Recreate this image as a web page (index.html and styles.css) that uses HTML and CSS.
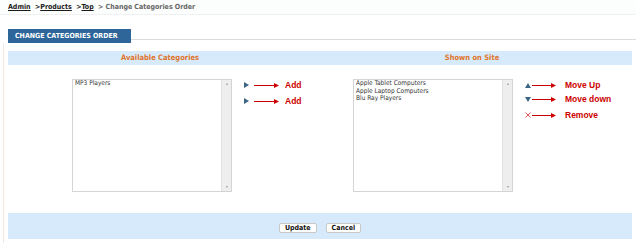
FILE: index.html
```html
<!DOCTYPE html>
<html>
<head>
<meta charset="utf-8">
<link rel="stylesheet" href="styles.css">
</head>
<body>
<div class="crumbs">
  <a class="crumb-link" href="#">Admin</a>&nbsp; &gt;<a class="crumb-link" href="#">Products</a>&nbsp; &gt;<a class="crumb-link" href="#">Top</a>&nbsp; <span class="crumb-cur">&gt; Change Categories Order</span>
</div>
<div class="tabrow">
  <div class="tab">CHANGE CATEGORIES ORDER</div>
  <div class="tabline"></div>
</div>
<div class="panel">
  <div class="headbar">
    <div class="headcell">Available Categories</div>
    <div class="headcell">Shown on Site</div>
  </div>
  <div class="cols">
    <div class="col col-left">
      <div class="listbox">
        <div class="items">
          <div>MP3 Players</div>
        </div>
        <div class="scroll"><span class="sc-up"></span><span class="sc-down"></span></div>
      </div>
      <div class="ctls ctls-left">
        <div class="ctl">
          <svg class="ico" width="5" height="6" viewBox="0 0 5 6"><polygon points="0,0 5,3 0,6" fill="#3d6684"/></svg>
          <svg class="arr arr-l" width="25" height="5" viewBox="0 0 25 5"><line x1="0" y1="2.5" x2="21" y2="2.5" stroke="#cc0000" stroke-width="1"/><polygon points="20,0 25,2.5 20,5" fill="#cc0000"/></svg>
          <span class="lbl">Add</span>
        </div>
        <div class="ctl">
          <svg class="ico" width="5" height="6" viewBox="0 0 5 6"><polygon points="0,0 5,3 0,6" fill="#3d6684"/></svg>
          <svg class="arr arr-l" width="25" height="5" viewBox="0 0 25 5"><line x1="0" y1="2.5" x2="21" y2="2.5" stroke="#cc0000" stroke-width="1"/><polygon points="20,0 25,2.5 20,5" fill="#cc0000"/></svg>
          <span class="lbl">Add</span>
        </div>
      </div>
    </div>
    <div class="col col-right">
      <div class="listbox">
        <div class="items">
          <div>Apple Tablet Computers</div>
          <div>Apple Laptop Computers</div>
          <div>Blu Ray Players</div>
        </div>
        <div class="scroll"><span class="sc-up"></span><span class="sc-down"></span></div>
      </div>
      <div class="ctls ctls-right">
        <div class="ctl ctl-r">
          <svg class="ico" width="6" height="5" viewBox="0 0 6 5"><polygon points="0,5 3,0 6,5" fill="#3d6684"/></svg>
          <svg class="arr arr-r" width="24" height="5" viewBox="0 0 24 5"><line x1="0" y1="2.5" x2="20" y2="2.5" stroke="#cc0000" stroke-width="1"/><polygon points="19,0 24,2.5 19,5" fill="#cc0000"/></svg>
          <span class="lbl">Move Up</span>
        </div>
        <div class="ctl ctl-r">
          <svg class="ico" width="6" height="5" viewBox="0 0 6 5"><polygon points="0,0 6,0 3,5" fill="#3d6684"/></svg>
          <svg class="arr arr-r" width="24" height="5" viewBox="0 0 24 5"><line x1="0" y1="2.5" x2="20" y2="2.5" stroke="#cc0000" stroke-width="1"/><polygon points="19,0 24,2.5 19,5" fill="#cc0000"/></svg>
          <span class="lbl">Move down</span>
        </div>
        <div class="ctl ctl-r ctl-remove">
          <svg class="ico" width="6" height="6" viewBox="0 0 6 6"><path d="M0.5 0.5 L5.5 5.5 M5.5 0.5 L0.5 5.5" stroke="#cc3333" stroke-width="0.8" fill="none"/></svg>
          <svg class="arr arr-r" width="24" height="5" viewBox="0 0 24 5"><line x1="0" y1="2.5" x2="20" y2="2.5" stroke="#cc0000" stroke-width="1"/><polygon points="19,0 24,2.5 19,5" fill="#cc0000"/></svg>
          <span class="lbl">Remove</span>
        </div>
      </div>
    </div>
  </div>
  <div class="footbar">
    <button class="btn" type="button">Update</button>
    <button class="btn" type="button">Cancel</button>
  </div>
</div>
</body>
</html>
```

FILE: styles.css
```css
html, body {
  margin: 0;
  padding: 0;
  background: #ffffff;
}
body {
  font-family: "DejaVu Sans Condensed", "DejaVu Sans", sans-serif;
  font-size: 7px;
  color: #222;
  width: 636px;
  height: 243px;
  overflow: hidden;
}
.crumbs {
  height: 15px;
  box-sizing: border-box;
  padding: 3px 0 0 8px;
  line-height: 8px;
  font-weight: bold;
  border-bottom: 1px solid #eef0f2;
  background: #fcfdfd;
  white-space: nowrap;
}
.crumb-link {
  color: #1a1a1a;
  text-decoration: underline;
}
.crumb-cur {
  color: #666;
}
.tabrow {
  display: flex;
  align-items: flex-start;
  margin-top: 14px;
  padding-left: 8px;
}
.tab {
  height: 14px;
  line-height: 14px;
  padding: 0 13px 0 7px;
  background: #2e6699;
  color: #fff;
  font-weight: bold;
  white-space: nowrap;
}
.tabline {
  flex: 1;
  height: 10px;
  border-bottom: 1px solid #dcdcdc;
}
.panel {
  margin-left: 3px;
  margin-right: 4px;
  border-left: 1px solid #f1e9e1;
  padding: 8px 0 4px 4px;
}
.headbar {
  display: flex;
  height: 14px;
  line-height: 14px;
  background: #d6eafb;
}
.headcell {
  flex: 1;
  text-align: center;
  padding-right: 8px;
  color: #e0742a;
  font-weight: bold;
  font-size: 7.5px;
}
.cols {
  display: flex;
  padding: 14px 0 21px;
}
.col {
  width: 312px;
  box-sizing: border-box;
  display: flex;
  align-items: flex-start;
  gap: 12px;
}
.col-left {
  padding-left: 64px;
}
.col-right {
  padding-left: 33px;
}
.listbox {
  width: 160px;
  height: 113px;
  box-sizing: border-box;
  border: 1px solid #d4d4d4;
  display: flex;
  background: #fff;
  flex: none;
}
.items {
  flex: 1;
  padding: 0 2px;
  font-size: 6.5px;
  line-height: 7.5px;
  color: #333;
}
.scroll {
  width: 9px;
  background: #eeeeee;
  border-left: 1px solid #e2e2e2;
  display: flex;
  flex-direction: column;
  justify-content: space-between;
  align-items: center;
  padding: 3px 0;
}
.sc-up {
  width: 0;
  height: 0;
  border-left: 1.5px solid transparent;
  border-right: 1.5px solid transparent;
  border-bottom: 2px solid #999;
}
.sc-down {
  width: 0;
  height: 0;
  border-left: 1.5px solid transparent;
  border-right: 1.5px solid transparent;
  border-top: 2px solid #999;
}
.ctls {
  display: flex;
  flex-direction: column;
  margin-top: -2px;
}
.ctls-right {
  margin-top: -1px;
}
.ctl {
  display: flex;
  align-items: center;
  height: 16px;
}
.ctls-right .ctl {
  height: 14px;
}
.ctls-right .ctl-remove {
  margin-top: 1px;
  height: 16px;
}
.ctls-left .ctl .arr {
  margin-left: 5px;
}
.ctls-left .ctl .lbl {
  margin-left: 6px;
}
.ctls-right .ctl .arr {
  margin-left: 1px;
}
.ctls-right .ctl .lbl {
  margin-left: 9px;
}
.ico, .arr {
  display: block;
  flex: none;
}
.lbl {
  font-family: "Liberation Sans", Arial, sans-serif;
  font-weight: bold;
  font-size: 8.5px;
  color: #cc0000;
  white-space: nowrap;
}
.footbar {
  height: 26px;
  box-sizing: border-box;
  background: #d6eafb;
  display: flex;
  justify-content: center;
  align-items: flex-start;
  gap: 9px;
  padding-top: 10px;
}
.btn {
  font-family: "DejaVu Sans Condensed", "DejaVu Sans", sans-serif;
  font-size: 7px;
  font-weight: bold;
  color: #111;
  height: 10px;
  line-height: 8px;
  padding: 0 5px;
  margin: 0;
  background: #fff;
  border: 1px solid #c8c8c8;
  border-radius: 2px;
}
```
